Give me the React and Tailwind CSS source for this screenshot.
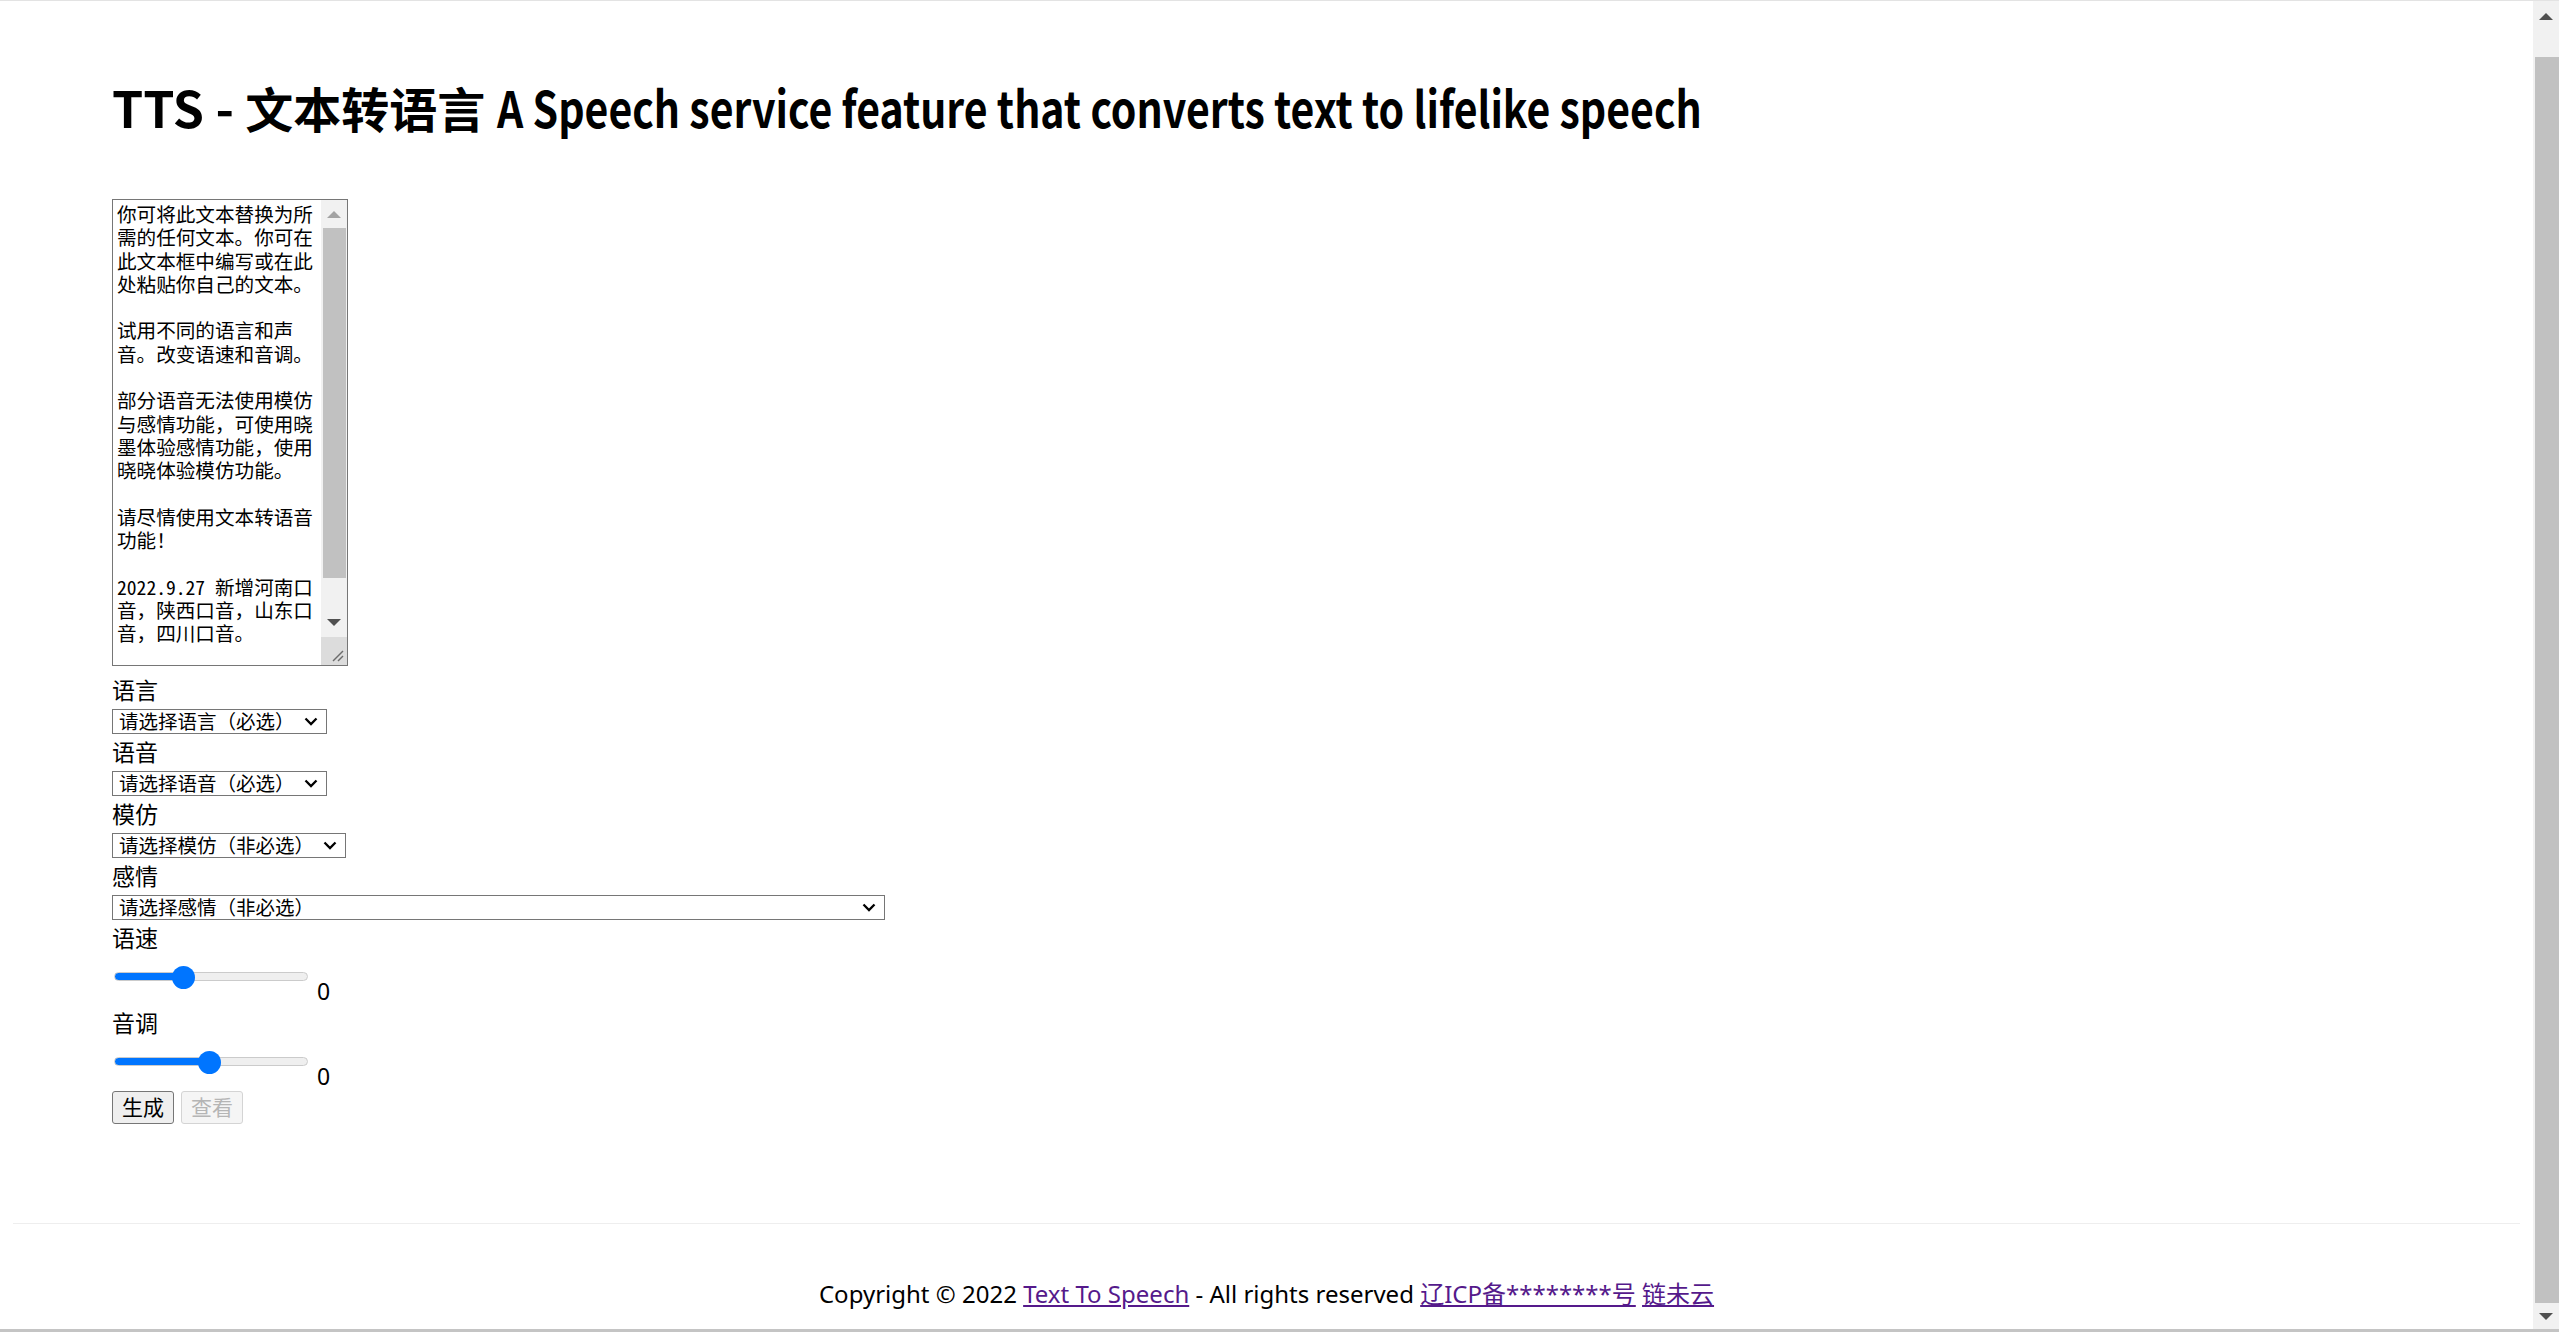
import React from "react";

const sampleText = `你可将此文本替换为所需的任何文本。你可在此文本框中编写或在此处粘贴你自己的文本。

试用不同的语言和声音。改变语速和音调。

部分语音无法使用模仿与感情功能，可使用晓墨体验感情功能，使用晓晓体验模仿功能。

请尽情使用文本转语音功能！

2022.9.27 新增河南口音，陕西口音，山东口音，四川口音。
`;

const ArrowUp = ({ color }) => (
  <svg width="14" height="7" viewBox="0 0 14 7">
    <polygon points="7,0 14,7 0,7" fill={color} />
  </svg>
);

const ArrowDown = ({ color }) => (
  <svg width="14" height="7" viewBox="0 0 14 7">
    <polygon points="0,0 14,0 7,7" fill={color} />
  </svg>
);

const Field = ({ label, placeholder, width }) => (
  <div>
    <div className="h-[37px] leading-[37px]">{label}</div>
    <div className={`relative h-[25px] ${width}`}>
      <select className="block h-full w-full appearance-none rounded-none border border-[#767676] bg-white pl-[6px] text-[19.5px] leading-none text-black outline-none">
        <option>{placeholder}</option>
      </select>
      {/* dropdown chevron */}
      <svg
        className="pointer-events-none absolute right-[9px] top-[8px]"
        width="14"
        height="9"
        viewBox="0 0 14 9"
        fill="none"
        stroke="#000"
        strokeWidth="2.3"
      >
        <path d="M1.5 1.5 L7 7 L12.5 1.5" />
      </svg>
    </div>
  </div>
);

const Slider = ({ label, value }) => {
  // fill follows the thumb centre: 11.5px radius, 194px track
  const fill = ((11.5 + (value / 100) * 171) / 194) * 100;
  return (
    <div>
      <div className="h-[37px] leading-[37px]">{label}</div>
      <div className="flex h-[48px] items-start">
        <input
          type="range"
          defaultValue={value}
          style={{ "--fill": `${fill}%` }}
          className="ml-[2px] mt-[8px] h-[23px] w-[194px] cursor-pointer appearance-none bg-transparent [&::-webkit-slider-runnable-track]:h-[9px] [&::-webkit-slider-runnable-track]:rounded-full [&::-webkit-slider-runnable-track]:border [&::-webkit-slider-runnable-track]:border-solid [&::-webkit-slider-runnable-track]:border-[#cbcbcb] [&::-webkit-slider-runnable-track]:[background:linear-gradient(to_right,#0075ff_var(--fill),#efefef_var(--fill))] [&::-webkit-slider-thumb]:mt-[-7px] [&::-webkit-slider-thumb]:h-[23px] [&::-webkit-slider-thumb]:w-[23px] [&::-webkit-slider-thumb]:appearance-none [&::-webkit-slider-thumb]:rounded-full [&::-webkit-slider-thumb]:bg-[#0075ff]"
        />
        <span className="ml-[9px] mt-[20px] text-[23px] leading-[28px]">0</span>
      </div>
    </div>
  );
};

export default function App() {
  return (
    <div className="flex h-screen flex-col overflow-hidden bg-white text-black [font-family:'Noto_Sans','Noto_Sans_CJK_SC',sans-serif]">
      <div className="h-px shrink-0 bg-[#e3e3e3]" />
      <div className="flex min-h-0 flex-1">
        <div className="flex min-w-0 flex-1 flex-col">
          <main className="px-[112px] pt-[77px] text-[23px]">
            <h1 className="mb-[65px] whitespace-nowrap text-[50px] font-bold leading-[56px] [font-family:'Noto_Sans_CJK_SC',sans-serif]">
              TTS -{" "}
              <span className="text-[48px] leading-none">文本转语言</span>{" "}
              {/* the original's latin face is much narrower */}
              <span className="inline-block origin-left scale-x-[0.82]">
                A Speech service feature that converts text to lifelike speech
              </span>
            </h1>

            {/* textarea with its classic scrollbar */}
            <div className="mb-[6px] flex h-[467px] w-[236px] border border-[#767676] bg-white">
              <textarea
                defaultValue={sampleText}
                className="min-w-0 flex-1 resize-none overflow-hidden pl-[4px] pr-[2px] pt-[2px] text-[19.6px] leading-[23.3px] text-black outline-none [font-family:'Noto_Sans_Mono_CJK_SC','Noto_Sans_CJK_SC',monospace]"
              />
              <div className="flex w-[26px] flex-col bg-[#f1f1f1]">
                <div className="flex h-[28px] items-center justify-center">
                  <ArrowUp color="#a3a3a3" />
                </div>
                <div className="ml-[2px] mr-px h-[350px] bg-[#c1c1c1]" />
                <div className="flex-1" />
                <div className="flex h-[29px] items-center justify-center">
                  <ArrowDown color="#505050" />
                </div>
                <div className="flex h-[28px] items-end justify-end bg-[#dcdcdc] p-[3px]">
                  <svg width="12" height="12" viewBox="0 0 12 12" stroke="#6b6b6b" strokeWidth="1.4">
                    <line x1="1" y1="11" x2="11" y2="1" />
                    <line x1="6" y1="11" x2="11" y2="6" />
                  </svg>
                </div>
              </div>
            </div>

            <Field label="语言" placeholder="请选择语言（必选）" width="w-[215px]" />
            <Field label="语音" placeholder="请选择语音（必选）" width="w-[215px]" />
            <Field label="模仿" placeholder="请选择模仿（非必选）" width="w-[234px]" />
            <Field label="感情" placeholder="请选择感情（非必选）" width="w-[773px]" />

            <Slider label="语速" value={34} />
            <Slider label="音调" value={49} />

            <div className="mt-px flex gap-[7px]">
              <button className="h-[33px] w-[62px] rounded-[3px] border-[1.5px] border-[#767676] bg-[#efefef] text-[21px] leading-none">
                生成
              </button>
              <button
                disabled
                className="h-[33px] w-[62px] rounded-[3px] border-[1.5px] border-[#d4d4d4] bg-[#f5f5f5] text-[21px] leading-none text-[#b5b5b5]"
              >
                查看
              </button>
            </div>
          </main>

          <footer className="mx-[13px] mt-[99px] border-t border-[#eeeeee] pt-[54px] text-center text-[24px] leading-[32px]">
            Copyright © 2022{" "}
            <a href="#" className="text-[#551a8b] underline">
              Text To Speech
            </a>{" "}
            - All rights reserved{" "}
            <a href="#" className="text-[#551a8b] underline">
              辽ICP备********号
            </a>{" "}
            <a href="#" className="text-[#551a8b] underline">
              链未云
            </a>
          </footer>
        </div>

        {/* page scrollbar, scrolled to the bottom */}
        <div className="flex w-[26px] shrink-0 flex-col bg-[#f1f1f1]">
          <div className="flex h-[30px] items-center justify-center">
            <ArrowUp color="#505050" />
          </div>
          <div className="h-[26px]" />
          <div className="ml-[2px] flex-1 bg-[#c1c1c1]" />
          <div className="flex h-[26px] items-center justify-center">
            <ArrowDown color="#505050" />
          </div>
        </div>
      </div>
      <div className="h-[3px] shrink-0 bg-[#c4c4c4]" />
    </div>
  );
}
